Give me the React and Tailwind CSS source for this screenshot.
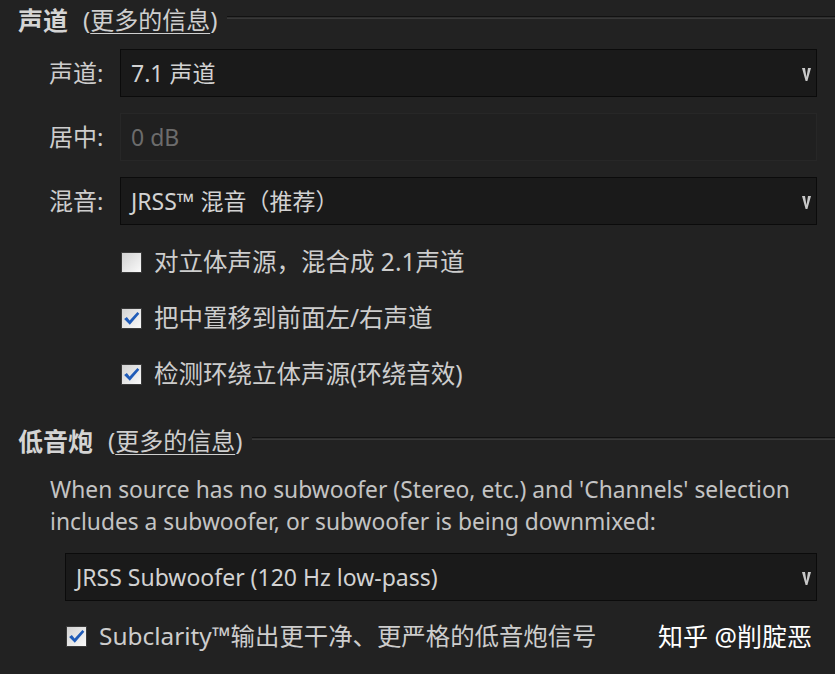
import React from 'react';

const font = { fontFamily: '"Noto Sans", "Noto Sans CJK SC", sans-serif' };

function Chevron() {
  return (
    <svg width="9" height="15" viewBox="0 0 9 15" className="shrink-0 mt-[2px]">
      <path d="M0 1 L3 1 L4.5 10 L6 1 L9 1 L5.4 14 L3.6 14 Z" fill="#c8c8c8" />
    </svg>
  );
}

function SectionHeader({ title }) {
  return (
    <div className="flex items-center h-[40px] pl-[18px]">
      <span className="text-[25px] font-bold text-[#d4d4d4] leading-none">{title}</span>
      <span className="text-[24px] text-[#cfcfcf] leading-none ml-[15px]">
        (<span className="underline underline-offset-[4px] decoration-1">更多的信息</span>)
      </span>
      <div className="flex-1 flex flex-col ml-[10px] -mt-[5px]">
        <div className="h-px bg-[#121212]" />
        <div className="h-px bg-[#2e2e2e]" />
        <div className="h-px bg-[#383838]" />
      </div>
    </div>
  );
}

function Select({ value, disabled }) {
  return (
    <div
      className={`flex-1 h-[48px] flex items-center justify-between pl-[10px] pr-[5px] border ${
        disabled ? 'border-[#272727] bg-[#202020]' : 'border-[#0b0b0b] bg-[#1a1a1a]'
      }`}
    >
      <span className={`text-[23px] leading-none ${disabled ? 'text-[#6c6c6c]' : 'text-[#d2d2d2]'}`}>{value}</span>
      {!disabled && <Chevron />}
    </div>
  );
}

function FieldRow({ label, value, disabled }) {
  return (
    <div className="flex items-center pr-[18px]">
      <div className="w-[106px] pl-[49px] text-[24px] text-[#cdcdcd] leading-none">{label}</div>
      <div className="w-[14px]" />
      <Select value={value} disabled={disabled} />
    </div>
  );
}

function Checkbox({ checked }) {
  return (
    <div className="w-[21px] h-[21px] border border-[#3a3a3a] bg-gradient-to-br from-[#d2d2d2] to-[#fafafa] flex items-center justify-center shrink-0">
      {checked && (
        <svg width="19" height="17" viewBox="0 0 18 16">
          <path d="M2 8.5 L4.6 6.6 L7.2 10 L14.6 1.8 L16.4 3.4 L7.4 14 Z" fill="#1f5bb8" />
        </svg>
      )}
    </div>
  );
}

function CheckRow({ checked, children }) {
  return (
    <div className="flex items-center h-[56px]">
      <Checkbox checked={checked} />
      <span className="ml-[12px] text-[24.5px] text-[#cdcdcd] leading-none">{children}</span>
    </div>
  );
}

export default function App() {
  return (
    <div className="w-[835px] h-[674px] bg-[#222222] overflow-hidden" style={font}>
      <SectionHeader title="声道" />

      <div className="mt-[9px] flex flex-col gap-[16px]">
        <FieldRow label="声道:" value="7.1 声道" />
        <FieldRow label="居中:" value="0 dB" disabled />
        <FieldRow label="混音:" value="JRSS™ 混音（推荐）" />
      </div>

      <div className="mt-[9px] pl-[121px] flex flex-col">
        <CheckRow>对立体声源，混合成 2.1声道</CheckRow>
        <CheckRow checked>把中置移到前面左/右声道</CheckRow>
        <CheckRow checked>检测环绕立体声源(环绕音效)</CheckRow>
      </div>

      <div className="mt-[19px]">
        <SectionHeader title="低音炮" />
      </div>

      <p className="mt-[13px] pl-[50px] pr-[20px] text-[22.8px] leading-[32px] text-[#c4c4c4]">
        When source has no subwoofer (Stereo, etc.) and 'Channels' selection includes a subwoofer, or subwoofer is being downmixed:
      </p>

      <div className="mt-[15px] pl-[65px] pr-[18px] flex">
        <Select value="JRSS Subwoofer (120 Hz low-pass)" />
      </div>

      <div className="mt-[13px] pl-[66px] pr-[23px] flex items-center justify-between h-[44px]">
        <div className="flex items-center">
          <Checkbox checked />
          <span className="ml-[12px] text-[24.4px] text-[#cdcdcd] leading-none">Subclarity™输出更干净、更严格的低音炮信号</span>
        </div>
        <span className="text-[25px] text-white leading-none">知乎 @削腚恶</span>
      </div>
    </div>
  );
}
